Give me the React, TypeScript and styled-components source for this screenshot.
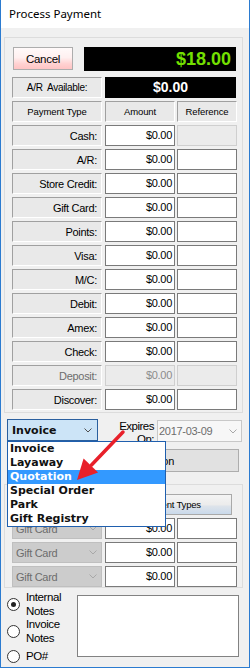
import React from 'react'
import styled, { createGlobalStyle } from 'styled-components'

const GlobalStyle = createGlobalStyle`
  html, body {
    margin: 0;
    padding: 0;
    background: #ffffff;
  }
  body {
    font-family: 'Liberation Sans', Arial, sans-serif;
    color: #000;
  }
  * {
    box-sizing: border-box;
  }
`

const paymentRows = [
  { label: 'Cash', refDisabled: true },
  { label: 'A/R' },
  { label: 'Store Credit' },
  { label: 'Gift Card' },
  { label: 'Points' },
  { label: 'Visa' },
  { label: 'M/C' },
  { label: 'Debit' },
  { label: 'Amex' },
  { label: 'Check' },
  { label: 'Deposit', disabled: true },
  { label: 'Discover' },
]

const orderTypes = ['Invoice', 'Layaway', 'Quotation', 'Special Order', 'Park', 'Gift Registry']

const Chevron = ({ color }: { color: string }) => (
  <svg width="8" height="5" viewBox="0 0 8 5">
    <polyline points="0.5,0.5 4,4 7.5,0.5" fill="none" stroke={color} strokeWidth="1" />
  </svg>
)

const App: React.FC = () => {
  return (
    <>
      <GlobalStyle />
      <Window>
        <TitleBar>Process Payment</TitleBar>
        <Body>
          <GroupBox $pt={9} $pb={2}>
            <TopRow>
              <CancelButton>Cancel</CancelButton>
              <TotalDisplay>$18.00</TotalDisplay>
            </TopRow>
            <FormGrid>
              <EtchedCell $w={90} $center>
                A/R&nbsp; Available:
              </EtchedCell>
              <ARDisplay>$0.00</ARDisplay>
              <EtchedCell $w={90} $center $small>
                Payment Type
              </EtchedCell>
              <EtchedCell $w={70} $center $small>
                Amount
              </EtchedCell>
              <EtchedCell $w={60} $center $small>
                Reference
              </EtchedCell>
              {paymentRows.map((row) => (
                <React.Fragment key={row.label}>
                  <EtchedCell $w={90} $disabled={row.disabled}>
                    {row.label}:
                  </EtchedCell>
                  <Field $w={70} $disabled={row.disabled}>
                    $0.00
                  </Field>
                  <Field $w={60} $disabled={row.disabled || row.refDisabled} />
                </React.Fragment>
              ))}
            </FormGrid>
          </GroupBox>

          <ComboRow>
            <ComboWrap>
              <OrderCombo>
                <span>Invoice</span>
                <Chevron color="#505050" />
              </OrderCombo>
              <DropList>
                {orderTypes.map((t) => (
                  <DropItem key={t} $active={t === 'Quotation'}>
                    {t}
                  </DropItem>
                ))}
              </DropList>
            </ComboWrap>
            <ExpiresLabel>
              Expires
              <br />
              On:
            </ExpiresLabel>
            <DatePicker>
              <span>2017-03-09</span>
              <Chevron color="#a8a8a8" />
            </DatePicker>
          </ComboRow>

          <WideButton>Redeem Promotion</WideButton>

          <GroupBox $pt={9} $pb={0} $mt={12}>
            <FormGrid>
              <TypesButton>Payment Types</TypesButton>
              {[0, 1, 2].map((i) => (
                <React.Fragment key={i}>
                  <GiftCombo>
                    <span>Gift Card</span>
                    <Chevron color="#a8a8a8" />
                  </GiftCombo>
                  <Field $w={70}>$0.00</Field>
                  <Field $w={60} />
                </React.Fragment>
              ))}
            </FormGrid>
          </GroupBox>

          <NotesRow>
            <RadioColumn>
              <RadioItem>
                <RadioCircle $checked />
                <RadioText>
                  Internal
                  <br />
                  Notes
                </RadioText>
              </RadioItem>
              <RadioItem>
                <RadioCircle />
                <RadioText>
                  Invoice
                  <br />
                  Notes
                </RadioText>
              </RadioItem>
              <RadioItem $mt={4.5}>
                <RadioCircle />
                <RadioText>PO#</RadioText>
              </RadioItem>
            </RadioColumn>
            <NotesBox />
          </NotesRow>
        </Body>

        <Arrow width="60" height="60" viewBox="0 0 60 60">
          <line x1="53" y1="7" x2="21.5" y2="40" stroke="#e8202a" strokeWidth="3.5" strokeLinecap="round" />
          <polygon points="7,55 28.1,47.5 13.6,33.6" fill="#e8202a" />
        </Arrow>
      </Window>
    </>
  )
}

export default App

const Window = styled.div`
  position: relative;
  width: 250px;
  height: 668px;
  display: flex;
  flex-direction: column;
  border: 1px solid #2b7bd0;
  border-top: none;
  background: #f0f0f0;
`

const TitleBar = styled.div`
  height: 28px;
  line-height: 28px;
  padding-left: 8px;
  background: #ffffff;
  font-family: 'Noto Sans', 'Open Sans', sans-serif;
  font-size: 11.5px;
`

const Body = styled.div`
  flex: 1;
  display: flex;
  flex-direction: column;
  padding: 9px 6px 0 3px;
`

const GroupBox = styled.div<{ $pt: number; $pb: number; $mt?: number }>`
  border: 1px solid #dcdcdc;
  margin-top: ${(p) => p.$mt || 0}px;
  padding: ${(p) => p.$pt}px 4px ${(p) => p.$pb}px 7px;
`

const TopRow = styled.div`
  display: flex;
  align-items: flex-start;
  height: 24px;
  margin-bottom: 6px;
`

const CancelButton = styled.button`
  margin: 0 0 0 1px;
  width: 60px;
  height: 23px;
  padding: 0;
  border: 1px solid #adadad;
  background: linear-gradient(#fffafa 0%, #fff0f0 45%, #ffd2d2 75%, #ffc4c4 100%);
  font-family: 'Liberation Sans', Arial, sans-serif;
  font-size: 11.5px;
  letter-spacing: -0.3px;
  color: #000;
`

const TotalDisplay = styled.div`
  margin-left: 11px;
  width: 152px;
  height: 24px;
  line-height: 24px;
  padding-right: 5px;
  background: #000;
  color: #74e000;
  font-weight: bold;
  font-size: 18px;
  text-align: right;
`

const FormGrid = styled.div`
  display: grid;
  grid-template-columns: 93px 72px 60px;
  grid-auto-rows: 21px;
  row-gap: 3px;
`

const EtchedCell = styled.div<{ $w: number; $center?: boolean; $small?: boolean; $disabled?: boolean }>`
  width: ${(p) => p.$w}px;
  height: 21px;
  display: flex;
  align-items: center;
  justify-content: ${(p) => (p.$center ? 'center' : 'flex-end')};
  padding-right: ${(p) => (p.$center ? 0 : 4)}px;
  border: 1px solid;
  border-color: #a0a0a0 #ffffff #ffffff #a0a0a0;
  background: #e9e9e9;
  font-size: ${(p) => (p.$small ? 9.5 : p.$center ? 10 : 11)}px;
  letter-spacing: ${(p) => (p.$small ? -0.1 : -0.3)}px;
  color: ${(p) => (p.$disabled ? '#6d6d6d' : '#000')};
  white-space: nowrap;
`

const ARDisplay = styled.div`
  grid-column: 2 / span 2;
  width: 131px;
  height: 21px;
  line-height: 21px;
  background: #000;
  color: #fff;
  font-weight: bold;
  font-size: 14px;
  text-align: center;
`

const Field = styled.div<{ $w: number; $disabled?: boolean }>`
  width: ${(p) => p.$w}px;
  height: 21px;
  line-height: 19px;
  padding-right: 2px;
  text-align: right;
  font-size: 11px;
  letter-spacing: -0.3px;
  border: 1px solid ${(p) => (p.$disabled ? '#cfcfcf' : '#7a7a7a')};
  background: ${(p) => (p.$disabled ? '#ebebeb' : '#ffffff')};
  color: ${(p) => (p.$disabled ? '#8c8c8c' : '#000')};
`

const ComboRow = styled.div`
  display: flex;
  align-items: flex-start;
  margin-top: 6px;
  padding: 0 1px 0 3px;
  height: 23px;
`

const ComboWrap = styled.div`
  position: relative;
  z-index: 5;
`

const OrderCombo = styled.div`
  width: 91px;
  height: 22px;
  display: flex;
  align-items: center;
  justify-content: space-between;
  padding: 0 5px 0 4px;
  border: 1px solid #2a5f9e;
  background: #cce4f7;
  font-family: 'DejaVu Sans', Verdana, sans-serif;
  font-weight: bold;
  font-size: 11px;
  color: #111;
`

const DropList = styled.div`
  position: absolute;
  top: 22px;
  left: 0;
  width: 159px;
  border: 1px solid #1f5fae;
  background: #ffffff;
`

const DropItem = styled.div<{ $active?: boolean }>`
  height: 14px;
  line-height: 14px;
  padding-left: 2px;
  font-family: 'DejaVu Sans', Verdana, sans-serif;
  font-weight: bold;
  font-size: 11px;
  background: ${(p) => (p.$active ? '#3399ff' : 'transparent')};
  color: ${(p) => (p.$active ? '#ffffff' : '#111')};
`

const ExpiresLabel = styled.div`
  flex: 1;
  margin-right: 3px;
  padding-top: 1px;
  text-align: right;
  font-size: 11.5px;
  line-height: 13px;
  letter-spacing: -0.5px;
`

const DatePicker = styled.div`
  margin-top: 1px;
  width: 85px;
  height: 22px;
  display: flex;
  align-items: center;
  justify-content: space-between;
  padding: 0 4px 0 1px;
  border: 1px solid #c8c8c8;
  background: #f7f7f7;
  color: #6d6d6d;
  font-size: 11px;
  letter-spacing: -0.3px;
`

const WideButton = styled.button`
  margin: 7px 4px 0 3px;
  height: 23px;
  padding: 0 0 0 12px;
  border: 1px solid #adadad;
  background: #e1e1e1;
  font-family: 'Liberation Sans', Arial, sans-serif;
  font-size: 11px;
  letter-spacing: -0.3px;
  color: #000;
`

const TypesButton = styled.button`
  grid-column: 2 / span 2;
  margin: 0 5px 0 0;
  height: 21px;
  padding: 0 0 0 2px;
  border: 1px solid #a9a9a9;
  background: linear-gradient(#f4f4f4 0%, #ececec 50%, #dde3ea 60%, #c9d9eb 100%);
  font-family: 'Liberation Sans', Arial, sans-serif;
  font-size: 9.5px;
  letter-spacing: -0.2px;
  color: #000;
`

const GiftCombo = styled.div`
  width: 90px;
  height: 21px;
  display: flex;
  align-items: center;
  justify-content: space-between;
  padding: 0 4px 0 3px;
  border: 1px solid #bfbfbf;
  background: #cccccc;
  color: #6d6d6d;
  font-size: 11px;
  letter-spacing: -0.3px;
`

const NotesRow = styled.div`
  display: flex;
  align-items: flex-start;
  margin-top: 3px;
  padding-left: 3px;
`

const RadioColumn = styled.div`
  width: 70px;
  display: flex;
  flex-direction: column;
`

const RadioItem = styled.div<{ $mt?: number }>`
  display: flex;
  align-items: center;
  gap: 6px;
  margin-top: ${(p) => p.$mt || 0}px;
`

const RadioCircle = styled.span<{ $checked?: boolean }>`
  position: relative;
  flex: none;
  width: 13px;
  height: 13px;
  border-radius: 50%;
  border: 1px solid #333333;
  background: #ffffff;
  &::after {
    content: '';
    display: ${(p) => (p.$checked ? 'block' : 'none')};
    position: absolute;
    left: 3px;
    top: 3px;
    width: 5px;
    height: 5px;
    border-radius: 50%;
    background: #222222;
  }
`

const RadioText = styled.span`
  font-size: 11.5px;
  line-height: 13.5px;
  letter-spacing: -0.4px;
`

const NotesBox = styled.div`
  margin-top: 4px;
  width: 162px;
  height: 62px;
  border: 1px solid #828282;
  background: #ffffff;
`

const Arrow = styled.svg`
  position: absolute;
  left: 69px;
  top: 425px;
  z-index: 10;
  pointer-events: none;
`
